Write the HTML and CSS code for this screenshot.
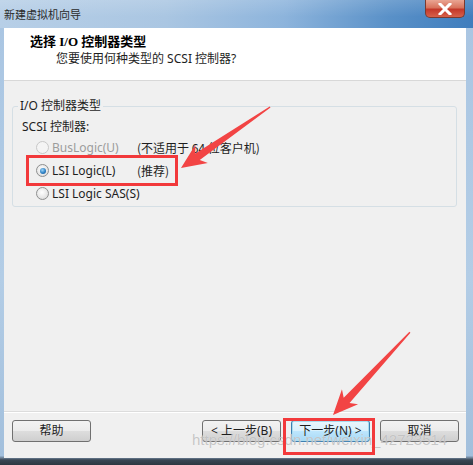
FILE: index.html
```html
<!DOCTYPE html>
<html lang="zh">
<head>
<meta charset="utf-8">
<title>新建虚拟机向导</title>
<link rel="stylesheet" href="styles.css">
</head>
<body>
<div class="window">
  <div class="titlebar">
    <span class="title">新建虚拟机向导</span>
    <span class="close"><svg width="14" height="12" viewBox="0 0 14 12"><path d="M2 1 L12 11 M12 1 L2 11" stroke="#fff" stroke-width="3" stroke-linecap="square"/></svg></span>
  </div>
  <div class="client">
    <div class="header">
      <div class="h-title">选择 I/O 控制器类型</div>
      <div class="h-sub">您要使用何种类型的 SCSI 控制器?</div>
    </div>
    <div class="body">
      <fieldset class="group">
        <legend class="legend">I/O 控制器类型</legend>
        <div class="scsi">SCSI 控制器:</div>
        <div class="row disabled">
          <label class="opt"><span class="radio"></span>BusLogic(U)</label>
          <span class="note">(不适用于 64 位客户机)</span>
        </div>
        <div class="row">
          <label class="opt"><span class="radio checked"></span>LSI Logic(L)</label>
          <span class="note">(推荐)</span>
        </div>
        <div class="row">
          <label class="opt"><span class="radio"></span>LSI Logic SAS(S)</label>
        </div>
      </fieldset>
    </div>
    <div class="footer">
      <button class="btn">帮助</button>
      <div class="nav">
        <button class="btn">&lt; 上一步(B)</button>
        <button class="btn default">下一步(N) &gt;</button>
        <button class="btn">取消</button>
      </div>
    </div>
  </div>
  <div class="watermark">https://blog.csdn.net/weixin_42723514</div>
  <svg class="marks" width="473" height="465" viewBox="0 0 473 465">
    <rect x="27.5" y="156.5" width="149" height="28" fill="none" stroke="#f2393b" stroke-width="3"/>
    <rect x="284.5" y="419.5" width="89" height="34" fill="none" stroke="#f2393b" stroke-width="3"/>
    <g transform="translate(181,168) rotate(-34.4)">
      <polygon points="0,0 25,-11 20,-4 108,-0.7 108,0.7 20,4 25,11" fill="#f24444"/>
    </g>
    <g transform="translate(333,415) rotate(-47.1)">
      <polygon points="0,0 25,-11 20,-4 113,-0.7 113,0.7 20,4 25,11" fill="#f24444"/>
    </g>
  </svg>
</div>
</body>
</html>
```
FILE: styles.css
```css
html, body {
  margin: 0;
  padding: 0;
}
body {
  width: 473px;
  height: 465px;
  overflow: hidden;
  font-family: "Noto Sans", "Noto Sans CJK SC", sans-serif;
  font-size: 12px;
  color: #1e1e1e;
}
.window {
  position: relative;
  width: 473px;
  height: 465px;
  display: flex;
  flex-direction: column;
  background: linear-gradient(to bottom, #a9c5e2 0%, #b3cde6 60%, #a2bfdc 98%, #3a4654 98.9%, #2d3640 100%);
  box-sizing: border-box;
}
.titlebar {
  height: 28px;
  flex: none;
  display: flex;
  align-items: flex-start;
  background:
    linear-gradient(to bottom, rgba(255,255,255,0.15), rgba(255,255,255,0) 60%),
    linear-gradient(to right, #b7cfe7 0%, #aac6e2 35%, #8db4dc 60%, #5a91c8 82%, #3f7dbd 100%);
}
.title {
  margin: 7px 0 0 4px;
  font-family: "Noto Sans CJK SC", sans-serif;
  font-size: 11px;
  line-height: 14px;
  color: #2a2a2a;
}
.close {
  margin-left: auto;
  margin-right: 8px;
  width: 40px;
  height: 18px;
  box-sizing: border-box;
  border: 1px solid #7a3a30;
  border-top: none;
  border-radius: 0 0 5px 5px;
  background: linear-gradient(to bottom, #e9a593 0%, #d8735d 45%, #c4382a 55%, #d6614a 100%);
  display: flex;
  align-items: center;
  justify-content: center;
}
.client {
  flex: none;
  margin: 0 7px 0 4px;
  height: 430px;
  background: #f0f0f0;
  display: flex;
  flex-direction: column;
}
.header {
  height: 52px;
  flex: none;
  background: #fff;
  border-bottom: 1px solid #d8d8d8;
  box-sizing: content-box;
  padding: 0;
}
.h-title {
  margin: 6px 0 0 26px;
  font-family: "Liberation Serif", "Noto Sans CJK SC", serif;
  font-weight: bold;
  font-size: 13px;
  line-height: 16px;
  color: #000;
}
.h-sub {
  margin: 1px 0 0 52px;
  font-family: "Noto Sans", "Noto Sans CJK SC", sans-serif;
  font-size: 12px;
  line-height: 16px;
  color: #1e1e1e;
}
.body {
  flex: 1;
  padding: 17px 9px 0 8px;
}
.group {
  margin: 0;
  padding: 4px 0 1px 9px;
  border: 1px solid #d5dfe5;
  border-radius: 3px;
  min-width: 0;
}
.legend {
  padding: 0 2px;
  margin-left: -4px;
  line-height: 16px;
  font-size: 12px;
}
.scsi {
  height: 18px;
  line-height: 18px;
}
.row {
  height: 23px;
  display: grid;
  grid-template-columns: 101px auto;
  align-items: center;
  margin-left: 14px;
}
.opt {
  display: flex;
  align-items: center;
  gap: 3px;
  white-space: nowrap;
}
.note {
  white-space: nowrap;
  font-family: "Noto Sans CJK SC", sans-serif;
}
.radio {
  width: 13px;
  height: 13px;
  box-sizing: border-box;
  border-radius: 50%;
  border: 1px solid #8e8f8f;
  background: radial-gradient(circle at 45% 40%, #ffffff 0%, #e6e6e6 60%, #d2d2d2 100%);
  flex: none;
  position: relative;
}
.radio.checked::after {
  content: "";
  position: absolute;
  left: 2.5px;
  top: 2.5px;
  width: 6px;
  height: 6px;
  border-radius: 50%;
  background: radial-gradient(circle at 40% 35%, #9fd5f8 0%, #2b80c4 55%, #1b4f8a 100%);
}
.disabled .opt {
  color: #9c9c9c;
}
.disabled .radio {
  border-color: #c8c8c8;
  background: #f4f4f4;
}
.footer {
  flex: none;
  height: 38px;
  border-top: 1px solid #dcdcdc;
  box-shadow: inset 0 1px 0 #ffffff;
  display: flex;
  justify-content: space-between;
  align-items: flex-start;
  padding: 8px 7px 0 8px;
  box-sizing: content-box;
}
.nav {
  display: flex;
  gap: 10px;
}
.btn {
  width: 79px;
  height: 22px;
  box-sizing: border-box;
  margin: 0;
  padding: 0;
  border: 1px solid #707070;
  border-radius: 3px;
  background: linear-gradient(to bottom, #f2f2f2 0%, #ebebeb 50%, #dddddd 51%, #cfcfcf 100%);
  font-family: "Noto Sans", "Noto Sans CJK SC", sans-serif;
  font-size: 12px;
  line-height: 18px;
  color: #1e1e1e;
}
.btn.default {
  border-color: #3c7fb1;
  box-shadow: inset 0 0 0 1px #a8dcf0;
  background: linear-gradient(to bottom, #eaf6fd 0%, #d9f0fc 50%, #bee6fd 51%, #a7d9f5 100%);
}
.watermark {
  position: absolute;
  left: 192px;
  top: 431px;
  font-family: "Liberation Sans", sans-serif;
  font-size: 15px;
  line-height: 18px;
  color: rgba(185, 185, 185, 0.8);
  text-shadow: 0 0 1px rgba(255,255,255,0.6);
  white-space: nowrap;
  pointer-events: none;
}
.marks {
  position: absolute;
  left: 0;
  top: 0;
  pointer-events: none;
}
```
